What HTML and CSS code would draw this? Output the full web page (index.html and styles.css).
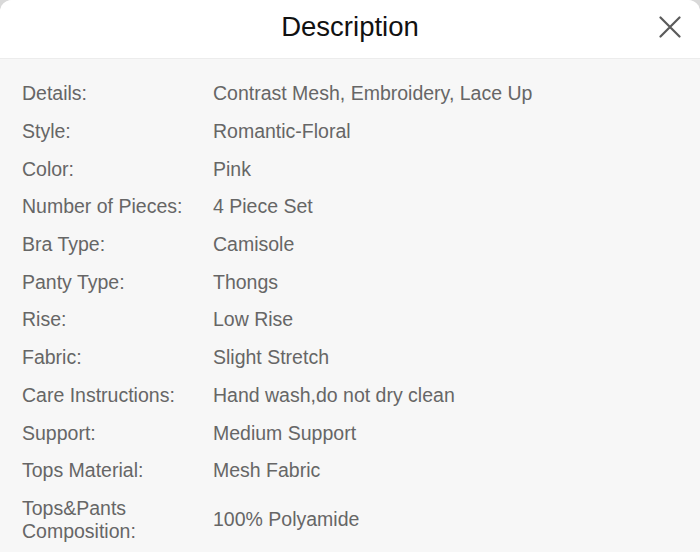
FILE: index.html
```html
<!DOCTYPE html>
<html>
<head>
<meta charset="utf-8">
<link rel="stylesheet" href="styles.css">
</head>
<body>
<div class="sheet">
  <header class="head">
    <h1 class="title">Description</h1>
    <button class="close" aria-label="Close">
      <svg width="22" height="22" viewBox="0 0 22 22"><path d="M1.5 1.5 L20.5 20.5 M20.5 1.5 L1.5 20.5" stroke="#5a5a5a" stroke-width="2.2" stroke-linecap="round" fill="none"/></svg>
    </button>
  </header>
  <div class="list">
    <div class="row"><div class="k">Details:</div><div class="v">Contrast Mesh, Embroidery, Lace Up</div></div>
    <div class="row"><div class="k">Style:</div><div class="v">Romantic-Floral</div></div>
    <div class="row"><div class="k">Color:</div><div class="v">Pink</div></div>
    <div class="row"><div class="k">Number of Pieces:</div><div class="v">4 Piece Set</div></div>
    <div class="row"><div class="k">Bra Type:</div><div class="v">Camisole</div></div>
    <div class="row"><div class="k">Panty Type:</div><div class="v">Thongs</div></div>
    <div class="row"><div class="k">Rise:</div><div class="v">Low Rise</div></div>
    <div class="row"><div class="k">Fabric:</div><div class="v">Slight Stretch</div></div>
    <div class="row"><div class="k">Care Instructions:</div><div class="v">Hand wash,do not dry clean</div></div>
    <div class="row"><div class="k">Support:</div><div class="v">Medium Support</div></div>
    <div class="row"><div class="k">Tops Material:</div><div class="v">Mesh Fabric</div></div>
    <div class="row"><div class="k">Tops&amp;Pants<br>Composition:</div><div class="v">100% Polyamide</div></div>
  </div>
</div>
</body>
</html>
```

FILE: styles.css
```css
html, body {
  margin: 0;
  padding: 0;
  background: #d9d9d9;
}
body {
  font-family: "Liberation Sans", Arial, sans-serif;
  width: 700px;
  height: 552px;
  overflow: hidden;
}
.sheet {
  background: #f7f7f7;
  border-radius: 12px 12px 0 0;
  height: 552px;
  overflow: hidden;
}
.head {
  position: relative;
  height: 59px;
  box-sizing: border-box;
  padding-bottom: 5px;
  background: #ffffff;
  border-bottom: 1px solid #ececec;
  display: flex;
  align-items: center;
  justify-content: center;
}
.title {
  margin: 0;
  font-size: 27.5px;
  line-height: 32px;
  font-weight: normal;
  color: #111;
}
.close {
  position: absolute;
  right: 19px;
  top: 16px;
  border: 0;
  background: none;
  padding: 0;
  width: 22px;
  height: 22px;
  display: block;
}
.close svg { display: block; }
.list {
  padding: 16px 0 0 22px;
}
.row {
  display: grid;
  grid-template-columns: 191px 1fr;
  align-items: center;
  padding: 7.35px 0;
  font-size: 19.5px;
  line-height: 23px;
  color: #666;
}
```
